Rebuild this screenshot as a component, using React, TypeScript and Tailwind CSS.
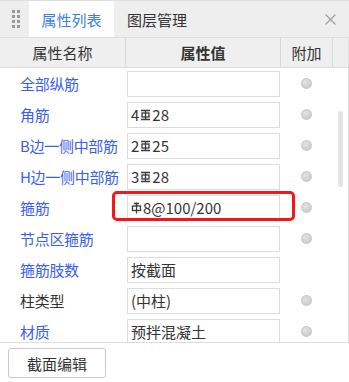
import React from 'react';

type Row = {
  label: string;
  value?: React.ReactNode;
  blue?: boolean;
  dot?: boolean;
};

function Grade3() {
  return (
    <svg width="11" height="12" viewBox="0 0 11 12" className="inline-block align-[3px] mx-[1px]" fill="none" stroke="#3a3a3a" strokeWidth="1.3">
      <path d="M1 1.5H10M1 10.5H10M5.5 1.5V10.5" />
      <rect x="2" y="4" width="7" height="4" />
    </svg>
  );
}

function Grade1() {
  return (
    <svg width="11" height="12" viewBox="0 0 11 12" className="inline-block align-[3px] mr-[1px]" fill="none" stroke="#3a3a3a" strokeWidth="1.3">
      <path d="M5.5 0.5V11.5M3 1.5H8" />
      <rect x="1.5" y="4" width="8" height="4.5" />
    </svg>
  );
}

const rows: Row[] = [
  { label: '全部纵筋', blue: true, dot: true },
  { label: '角筋', value: <>4<Grade3 />28</>, blue: true, dot: true },
  { label: 'B边一侧中部筋', value: <>2<Grade3 />25</>, blue: true, dot: true },
  { label: 'H边一侧中部筋', value: <>3<Grade3 />28</>, blue: true, dot: true },
  { label: '箍筋', value: <><Grade1 />8@100/200</>, blue: true, dot: true },
  { label: '节点区箍筋', blue: true, dot: true },
  { label: '箍筋肢数', value: '按截面', blue: true },
  { label: '柱类型', value: '(中柱)', dot: true },
  { label: '材质', value: '预拌混凝土', blue: true, dot: true },
];

function Dot() {
  return <span className="block w-[11px] h-[11px] rounded-full bg-[radial-gradient(circle_at_40%_35%,#e4e4e4,#c4c4c4)] border border-[#c6c6c6]" />;
}

export default function App() {
  return (
    <div className="w-[349px] h-[382px] bg-white overflow-hidden text-[15px] text-[#333] font-['Noto_Sans_CJK_SC','Noto_Sans',sans-serif]">
      {/* tabs */}
      <div className="h-[38px] flex bg-[#eeeeee] border-t border-b border-[#dedede]">
        <div className="w-[29px] flex items-center justify-center pl-[3px]">
          <div className="grid grid-cols-2 gap-x-[2px] gap-y-[2px]">
            {Array.from({ length: 8 }).map((_, i) => (
              <span key={i} className="block w-[3px] h-[3px] bg-[#9a9a9a]" />
            ))}
          </div>
        </div>
        <div className="w-[85px] bg-white flex items-center justify-center text-[#3b7df0] leading-none">属性列表</div>
        <div className="pl-[13px] flex items-center leading-none">图层管理</div>
        <div className="flex-1" />
        <div className="w-[38px] flex items-center justify-center text-[#a0a0a0]">
          <svg width="11" height="11" viewBox="0 0 11 11" stroke="currentColor" strokeWidth="1.2">
            <path d="M0.5 0.5L10.5 10.5M10.5 0.5L0.5 10.5" />
          </svg>
        </div>
      </div>

      {/* table */}
      <div className="relative h-[305px] overflow-hidden border-b border-r border-[#dedede]">
        <div className="grid grid-cols-[126px_155px_52px] h-[30px] bg-[#efefef] border-b border-[#dcdcdc] leading-none">
          <div className="flex items-center justify-center border-r border-[#d8d8d8]">属性名称</div>
          <div className="flex items-center justify-center border-r border-[#d8d8d8] font-bold">属性值</div>
          <div className="flex items-center justify-center border-r border-[#d8d8d8]">附加</div>
        </div>
        {rows.map((r) => (
          <div key={r.label} className="grid grid-cols-[126px_155px_52px] h-[31px] leading-none">
            <div className={`flex items-center pl-[20px] whitespace-nowrap tracking-[-0.3px] ${r.blue ? 'text-[#3a5ef0]' : 'text-[#333]'}`}>{r.label}</div>
            <div className="flex items-center pl-px">
              <div className="w-[153px] h-[26px] border border-[#dcdcdc] bg-white flex items-center pl-[3px] whitespace-nowrap">{r.value}</div>
            </div>
            <div className="flex items-center justify-center pr-[2px]">{r.dot && <Dot />}</div>
          </div>
        ))}
        <div className="absolute left-[338px] top-[73px] w-[5px] h-[76px] rounded-full bg-[#e4e4e4]" />
        <div className="absolute left-[112px] top-[153px] w-[183px] h-[30px] border-[3.5px] border-[#f01818] rounded-[5px]" />
      </div>

      <div className="pl-[8px] pt-[5px]">
        <button className="w-[98px] h-[30px] border border-[#c8c8c8] rounded-[3px] bg-white text-[#333] leading-none">截面编辑</button>
      </div>
    </div>
  );
}
